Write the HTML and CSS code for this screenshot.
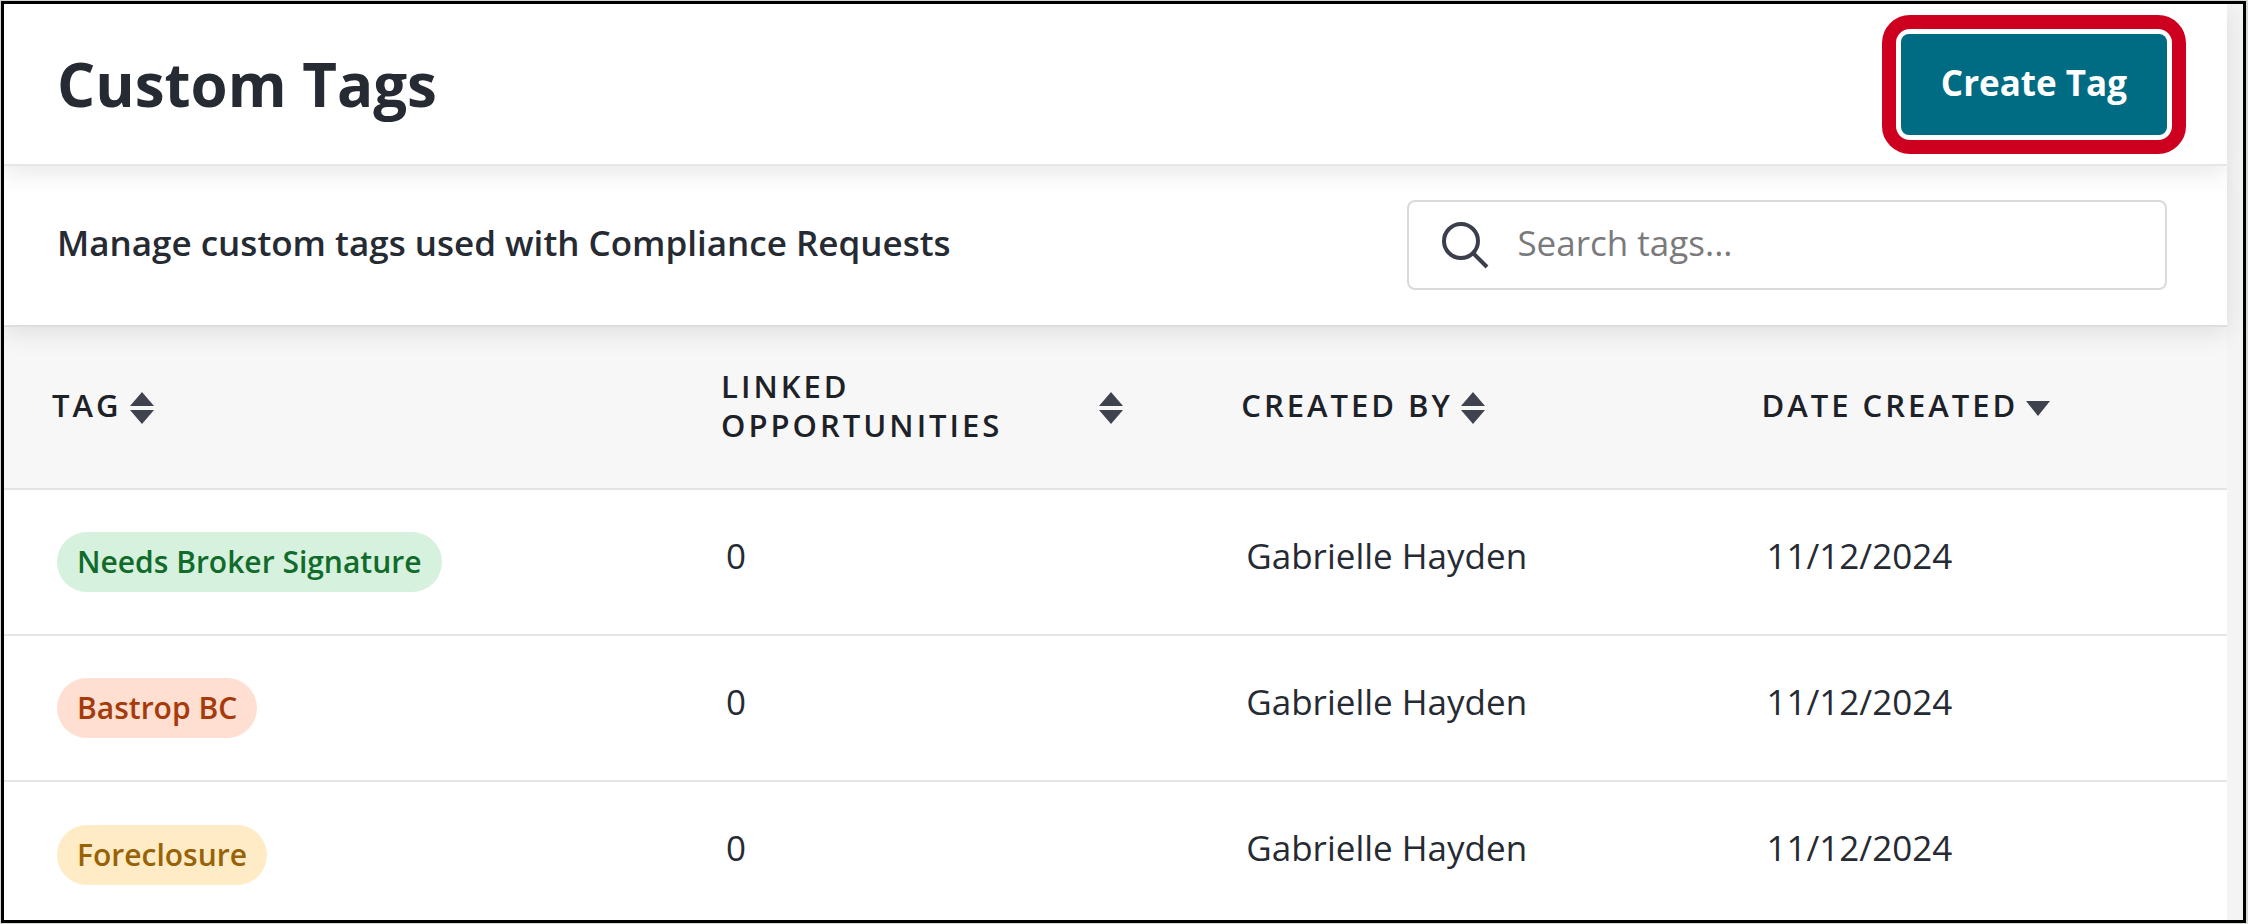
FILE: index.html
```html
<!DOCTYPE html>
<html lang="en">
<head>
    <meta charset="UTF-8">
    <meta name="viewport" content="width=device-width, initial-scale=1.0">
    <title>Custom Tags</title>
    <link rel="stylesheet" href="styles.css">
</head>
<body>
    <div class="frame">
        <main class="page">
            <header class="page-header">
                <h1 class="title">Custom Tags</h1>
                <div class="highlight">
                    <button type="button" class="create-button">Create Tag</button>
                </div>
            </header>
            <div class="toolbar">
                <h2 class="subtitle">Manage custom tags used with Compliance Requests</h2>
                <label class="search">
                    <svg class="search-icon" viewBox="0 0 48 48" aria-hidden="true">
                        <circle cx="20" cy="20" r="17"/>
                        <path d="M32 32 L46 46"/>
                    </svg>
                    <input type="search" class="search-input" placeholder="Search tags..." aria-label="Search tags">
                </label>
            </div>
            <table class="tags">
                <thead>
                    <tr>
                        <th class="col-tag">
                            <button type="button" class="sort">
                                <span class="sort-label">Tag</span>
                                <svg class="sort-icon" viewBox="0 0 24 32" aria-hidden="true"><path d="M12 0 L24 14 H0 Z M0 18 H24 L12 32 Z"/></svg>
                            </button>
                        </th>
                        <th class="col-linked">
                            <button type="button" class="sort">
                                <span class="sort-label">Linked Opportunities</span>
                                <svg class="sort-icon" viewBox="0 0 24 32" aria-hidden="true"><path d="M12 0 L24 14 H0 Z M0 18 H24 L12 32 Z"/></svg>
                            </button>
                        </th>
                        <th class="col-creator">
                            <button type="button" class="sort">
                                <span class="sort-label">Created By</span>
                                <svg class="sort-icon" viewBox="0 0 24 32" aria-hidden="true"><path d="M12 0 L24 14 H0 Z M0 18 H24 L12 32 Z"/></svg>
                            </button>
                        </th>
                        <th class="col-date" aria-sort="descending">
                            <button type="button" class="sort">
                                <span class="sort-label">Date Created</span>
                                <svg class="sort-icon" viewBox="0 0 24 32" aria-hidden="true"><path d="M0 9 H24 L12 24 Z"/></svg>
                            </button>
                        </th>
                    </tr>
                </thead>
                <tbody>
                    <tr>
                        <td class="tag-cell"><span class="tag green">Needs Broker Signature</span></td>
                        <td>0</td>
                        <td>Gabrielle Hayden</td>
                        <td>11/12/2024</td>
                    </tr>
                    <tr>
                        <td class="tag-cell"><span class="tag orange">Bastrop BC</span></td>
                        <td>0</td>
                        <td>Gabrielle Hayden</td>
                        <td>11/12/2024</td>
                    </tr>
                    <tr>
                        <td class="tag-cell"><span class="tag yellow">Foreclosure</span></td>
                        <td>0</td>
                        <td>Gabrielle Hayden</td>
                        <td>11/12/2024</td>
                    </tr>
                </tbody>
            </table>
        </main>
    </div>
</body>
</html>
```

FILE: styles.css
```css
* {
    box-sizing: border-box;
}

body {
    margin: 0;
    padding: 1px 2px 1px 1px;
    height: 100vh;
    background-color: #d5d8d5;
    font-family: "Open Sans", "Noto Sans", sans-serif;
    font-size: 35px;
    color: #262a33;
}

.frame {
    height: 100%;
    padding-right: 16px;
    border: 3px solid #000;
    background-color: #f4f4f5;
    overflow: hidden;
}

.page {
    height: 100%;
    background-color: #fff;
}

.page-header {
    position: relative;
    z-index: 2;
    display: flex;
    justify-content: space-between;
    align-items: flex-start;
    height: 162px;
    padding: 11px 41px 0 53px;
    border-bottom: 2px solid #e6e6e6;
    box-shadow: 0 6px 24px rgba(0, 0, 0, 0.1);
    background-color: #fff;
}

.title {
    margin: 0;
    font-size: 60px;
    line-height: 138px;
    font-weight: 700;
}

.highlight {
    padding: 5px;
    border: 14px solid #ce001f;
    border-radius: 28px;
}

.create-button {
    display: block;
    height: 101px;
    padding: 0 40px 4px;
    border: none;
    border-radius: 8px;
    background-color: #006c83;
    font-family: inherit;
    font-size: 35px;
    font-weight: 700;
    color: #fff;
    cursor: pointer;
}

.toolbar {
    position: relative;
    z-index: 1;
    display: flex;
    justify-content: space-between;
    align-items: center;
    height: 161px;
    padding: 0 60px 2px 53px;
    border-bottom: 2px solid #dedede;
    box-shadow: 0 6px 24px rgba(0, 0, 0, 0.1);
    background-color: #fff;
}

.subtitle {
    margin: 0;
    padding-bottom: 4px;
    font-size: 35px;
    font-weight: 600;
}

.search {
    display: flex;
    align-items: center;
    gap: 28px;
    width: 36%;
    height: 90px;
    padding: 0 32px;
    border: 2px solid #dadada;
    border-radius: 8px;
}

.search-icon {
    flex: none;
    width: 48px;
    height: 48px;
    fill: none;
    stroke: #3a3f4b;
    stroke-width: 4;
}

.search-input {
    flex: 1;
    min-width: 0;
    padding: 0 0 4px;
    border: none;
    outline: none;
    background: none;
    font: inherit;
    color: inherit;
}

.search-input::placeholder {
    color: #7a7a7c;
}

.tags {
    width: 100%;
    table-layout: fixed;
    border-collapse: collapse;
}

.tags th {
    height: 162px;
    padding: 0 70px 0 48px;
    border-bottom: 2px solid #e4e4e4;
    background-color: #f7f7f7;
    text-align: left;
}

.tags td {
    height: 146px;
    padding: 0 48px 14px 53px;
    border-bottom: 2px solid #e6e6e6;
}

.tags .tag-cell {
    padding-bottom: 0;
}

.tags tr:last-child td {
    border-bottom: none;
}

.col-tag {
    width: 30.1%;
}

.col-linked,
.col-creator {
    width: 23.4%;
}

.sort {
    display: flex;
    align-items: center;
    gap: 8px;
    padding: 0;
    border: none;
    background: none;
    font-family: inherit;
    font-size: 31px;
    font-weight: 600;
    line-height: 39px;
    letter-spacing: 3px;
    text-align: left;
    text-transform: uppercase;
    color: #1d2128;
    cursor: pointer;
}

.sort-label {
    padding-bottom: 4px;
}

.sort-icon {
    flex: none;
    width: 24px;
    height: 32px;
    fill: #3f434d;
}

.tag {
    display: inline-block;
    padding: 0 20px;
    border-radius: 30px;
    font-size: 30px;
    font-weight: 600;
    line-height: 60px;
}

.green {
    background-color: #d6f1de;
    color: #116b2b;
}

.orange {
    background-color: #fedfd1;
    color: #a63a0a;
}

.yellow {
    background-color: #ffecc6;
    color: #986207;
}
```
